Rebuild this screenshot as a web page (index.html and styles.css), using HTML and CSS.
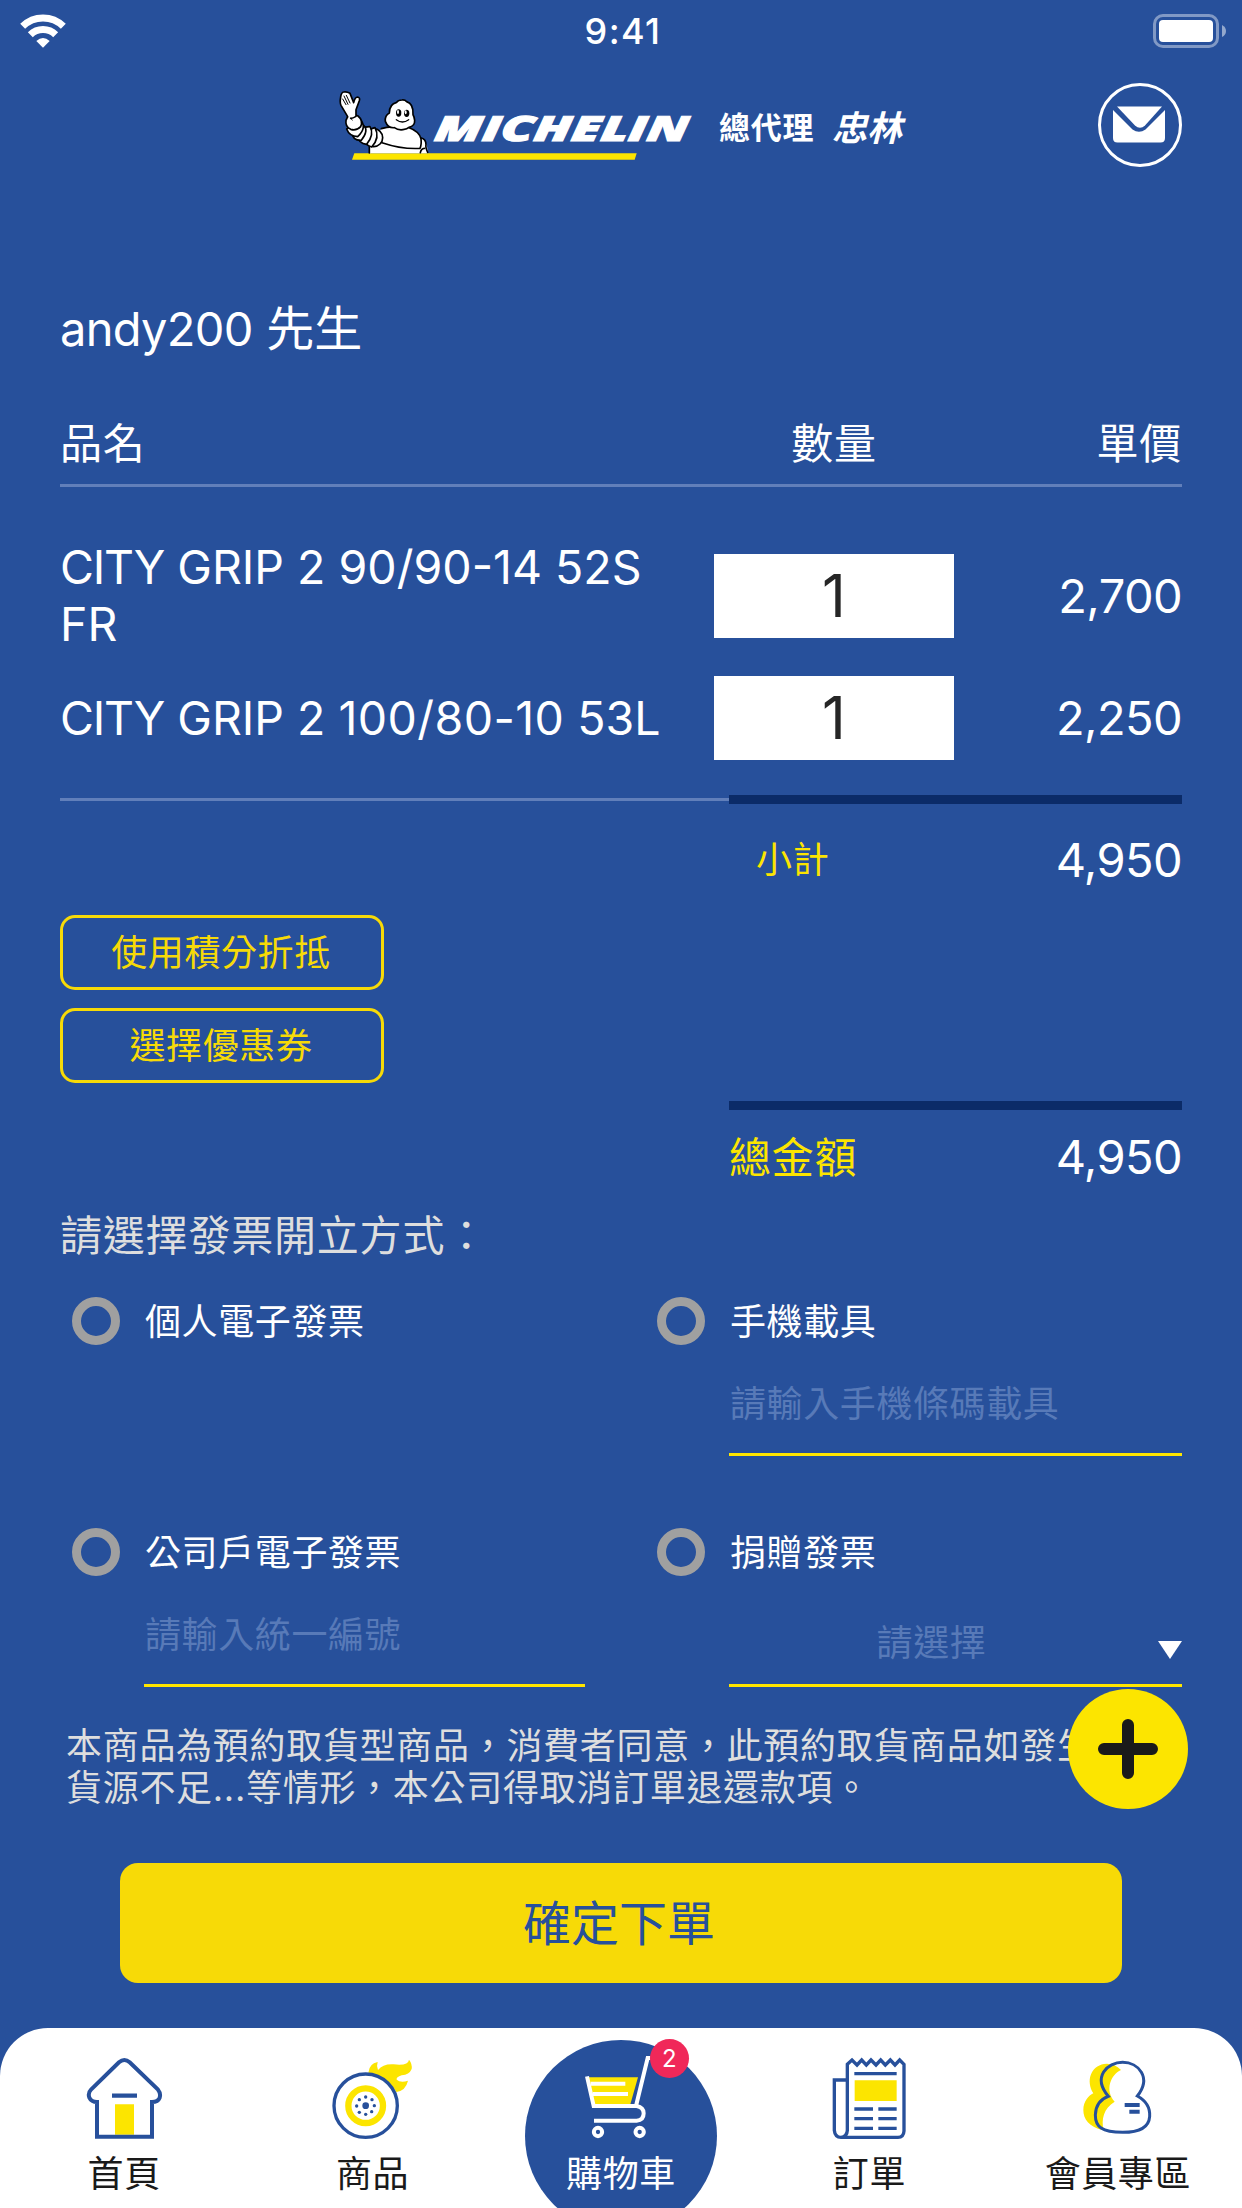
FILE: index.html
```html
<!DOCTYPE html>
<html lang="zh-TW">
<head>
<meta charset="utf-8">
<title>購物車</title>
<link rel="stylesheet" href="styles.css">
</head>
<body>
<div class="screen">
  <div class="status">
    <svg class="wifi" viewBox="0 0 138 102" width="46" height="34">
      <g fill="none" stroke="#fff">
        <path d="M8 37a87 87 0 0 1 122 0" stroke-width="21"/>
        <path d="M31 62a54 54 0 0 1 76 0" stroke-width="21"/>
      </g>
      <path d="M49 81q20-18 40 0l-20 20z" fill="#fff"/>
    </svg>
    <span class="time">9:41</span>
    <svg class="battery" viewBox="0 0 73 34" width="73" height="34">
      <rect x="1.5" y="1.5" width="63" height="31" rx="8.5" fill="none" stroke="#fff" stroke-opacity=".42" stroke-width="3"/>
      <rect x="6" y="6" width="54" height="22" rx="4" fill="#fff"/>
      <path d="M69 11q4 2 4 6t-4 6z" fill="#fff" fill-opacity=".5"/>
    </svg>
  </div>

  <header class="header">
    <svg class="logo" viewBox="39 51 1080 231" width="360" height="77">
      <path d="M103 250H950L944 269H96z" fill="#fce500"/>
      <g fill="#fff" stroke="#000" stroke-width="5" stroke-linejoin="round" stroke-linecap="round">
        <path d="M148 250V226L184 176Q203 172 214 171H265Q297 184 304 204Q321 210 324 250z" stroke="none"/>
        <path d="M148 249V228M184 176Q203 170 222 171M264 172Q297 184 303 206Q305 225 300 235Q245 238 186 218" fill="none"/>
        <path d="M304 204Q318 208 318 224Q316 232 323 247M313 235Q303 236 301 248" fill="none"/>
        <path d="M246 90Q234 90 230 97Q208 102 208 129Q194 137 196 154Q204 175 223 173Q234 181 249 179Q262 178 267 172Q285 168 284 151Q283 140 279 134Q281 101 260 95Q255 89 246 90z"/>
        <circle cx="161" cy="203" r="27"/>
        <path d="M165 173Q181 203 155 231Q133 226 131 201Q140 178 165 173z"/>
        <path d="M150 170Q164 193 140 223Q116 222 110 194Q125 169 150 170z"/>
        <path d="M131 166Q147 181 124 211Q98 212 95 187Q111 164 131 166z"/>
        <path d="M120 148Q143 172 113 200Q88 199 80 177z"/>
        <path d="M83 140Q97 128 114 138Q130 151 122 170Q110 183 92 178Q75 170 78 151z"/>
        <path d="M83 140L63 106Q59 98 62 81Q64 67 71 66Q80 64 90 70L101 98Q105 81 113 81Q121 83 118 92L108 119V139Q99 145 92 145" />
        <path d="M68 87L78 104M72 78L84 103M79 76L90 99M92 145L97 150" fill="none" stroke-width="3"/>
        <path d="M229 149Q247 163 266 149" fill="none" stroke-width="4"/>
      </g>
      <ellipse cx="236" cy="129" rx="8" ry="11" fill="#000"/><ellipse cx="260" cy="130" rx="8" ry="11" fill="#000"/>
      <ellipse cx="234" cy="126" rx="3" ry="6" fill="#fff"/><ellipse cx="257" cy="127" rx="3" ry="6" fill="#fff"/>
      <text class="wordmark" transform="translate(340 212) skewX(-8)" textLength="761" lengthAdjust="spacingAndGlyphs">MICHELIN</text>
    </svg>
    <div class="agent"><b>總代理</b><i>忠林</i></div>
    <svg class="mail" viewBox="0 0 84 84" width="84" height="84">
      <circle cx="42" cy="42" r="40.5" fill="none" stroke="#fff" stroke-width="3"/>
      <path d="M19 23.500H64L47 42.500Q42 47 37 42.500z" fill="#fff"/>
      <path d="M15 27L34.500 46.500Q41 51 47.500 46.500L67 27V55Q67 59.500 62.500 59.500H19.500Q15 59.500 15 55z" fill="#fff"/>
    </svg>
  </header>

  <main class="content">
    <h1 class="customer"><span class="account">andy200</span> 先生</h1>

    <div class="row head"><span>品名</span><span class="qty-h">數量</span><span class="price">單價</span></div>
    <div class="items">
      <div class="row"><span class="name"><span class="tight">CITY</span> GRIP 2 90/90-14 52S FR</span><span class="qty">1</span><span class="price">2,700</span></div>
      <div class="row"><span class="name"><span class="tight">CITY</span> GRIP 2 <span class="loose">100/80-10</span> 53L</span><span class="qty">1</span><span class="price">2,250</span></div>
    </div>
    <div class="divider"><span class="thin"></span><span class="thick"></span></div>

    <div class="subtotal"><span class="label">小計</span><span class="price">4,950</span></div>
    <div class="discounts">
      <div class="outline">使用積分折抵</div>
      <div class="outline">選擇優惠券</div>
    </div>
    <div class="divider second"><span class="thick"></span></div>
    <div class="total"><span class="label">總金額</span><span class="price">4,950</span></div>

    <h2 class="invoice-title">請選擇發票開立方式：</h2>
    <div class="invoices">
      <div class="option"><span class="radio"></span><span class="caption">個人電子發票</span></div>
      <div class="option"><span class="radio"></span><span class="caption">手機載具</span><div class="field">請輸入手機條碼載具</div></div>
      <div class="option"><span class="radio"></span><span class="caption">公司戶電子發票</span><div class="field">請輸入統一編號</div></div>
      <div class="option"><span class="radio"></span><span class="caption">捐贈發票</span>
        <div class="field select"><span>請選擇</span><svg viewBox="0 0 24 18" width="24" height="18"><path d="M0 0H24L12 18z" fill="#fff"/></svg></div>
      </div>
    </div>

    <p class="notice">本商品為預約取貨型商品，消費者同意，此預約取貨商品如發生<br>貨源不足...等情形，本公司得取消訂單退還款項。</p>
    <div class="confirm">確定下單</div>
  </main>

  <svg class="fab" viewBox="0 0 120 120" width="120" height="120">
    <circle cx="60" cy="60" r="60" fill="#fce500"/>
    <path d="M36 60H84M60 36V84" stroke="#1a1a1a" stroke-width="12" stroke-linecap="round"/>
  </svg>

  <nav class="nav">
    <div class="tab">
      <svg viewBox="237 138 270 252" width="90" height="84">
        <path d="M345 283H402V374H345z" fill="#fce500"/>
        <path d="M291 380H456V276Q474 276 479 263Q483 250 474 239L389 157Q373 143 357 157L273 239Q263 249 268 263Q274 276 291 276z" fill="none" stroke="#27509b" stroke-width="12"/>
        <path d="M336 257H411" stroke="#27509b" stroke-width="13"/>
      </svg>
      <span>首頁</span>
    </div>
    <div class="tab">
      <svg viewBox="983 138 270 252" width="90" height="84">
        <path d="M1104 188Q1107 160 1132 156Q1128 167 1133 180Q1148 161 1180 163Q1224 168 1226 149Q1236 161 1234 177Q1227 194 1204 196Q1187 201 1189 209Q1201 220 1223 212Q1216 242 1188 246Q1163 202 1104 188z" fill="#fce500"/>
        <circle cx="1096" cy="287" r="95" fill="#fff" stroke="#27509b" stroke-width="10"/>
        <circle cx="1096" cy="287" r="52" fill="none" stroke="#fce500" stroke-width="19"/>
        <g fill="#27509b"><circle cx="1096" cy="287" r="10"/><circle cx="1096" cy="261" r="5"/><circle cx="1096" cy="313" r="5"/><circle cx="1069" cy="288" r="5"/><circle cx="1122" cy="287" r="5"/><circle cx="1077" cy="269" r="5"/><circle cx="1115" cy="269" r="5"/><circle cx="1077" cy="307" r="5"/><circle cx="1114" cy="305" r="5"/></g>
      </svg>
      <span>商品</span>
    </div>
    <div class="tab active">
      <svg viewBox="228 138 270 252" width="90" height="84">
        <path d="M264 202H414L391 283H280z" fill="#fce500"/>
        <g fill="none" stroke="#fff" stroke-width="12">
          <path d="M261 199L281 288H410Q431 292 431 310Q431 331 410 332H282"/>
          <path d="M451 144H443L408 288M272 221H376M278 252H384"/>
          <circle cx="294" cy="366" r="12.500"/><circle cx="419" cy="366" r="12.500"/>
        </g>
      </svg>
      <span>購物車</span>
      <b class="badge">2</b>
    </div>
    <div class="tab">
      <svg viewBox="973 138 270 252" width="90" height="84">
        <path d="M1065 211H1191V273H1065z" fill="#fce500"/>
        <g fill="none" stroke="#27509b" stroke-width="10">
          <path d="M1043 210H1004V361Q1006 382 1024 382H1195Q1212 382 1213 363V163L1200 150L1186 165L1172 150L1157 165L1143 150L1129 165L1114 150L1100 165L1086 150L1072 165L1057 150L1043 163V361Q1042 380 1024 382"/>
          <path d="M1064 191H1191M1064 297H1120M1136 297H1191M1064 326H1120M1136 326H1191M1064 355H1120M1136 355H1191"/>
        </g>
      </svg>
      <span>訂單</span>
    </div>
    <div class="tab">
      <svg viewBox="518 138 270 252" width="90" height="84">
        <path d="M662 180C630 195 613 242 643 275C610 295 602 328 610 361C565 352 549 326 549 300C549 274 565 257 579 250C556 213 571 169 611 162Q640 158 662 180z" fill="#fce500"/>
        <path d="M624 259C575 200 621 157 667 157C714 157 755 202 711 258C746 277 749 303 748 319C746 351 722 367 667 367C604 367 585 350 585 315C586 285 601 267 624 259z" fill="none" stroke="#27509b" stroke-width="9"/>
        <path d="M673 285H718M687 305H718" stroke="#27509b" stroke-width="12"/>
      </svg>
      <span>會員專區</span>
    </div>
  </nav>
</div>
</body>
</html>
```
FILE: styles.css
```css
* { box-sizing: border-box; }
body {
  margin: 0;
  background: #27509b;
  color: #fff;
  font-family: Inter, "Noto Sans CJK TC", sans-serif;
  font-size: 36px;
  font-weight: 400;
}
h1, h2, p { margin: 0; font-weight: inherit; }
svg { display: block; flex: none; }

.screen {
  position: relative;
  width: 1242px;
  height: 2208px;
  overflow: hidden;
  display: flex;
  flex-direction: column;
}

.status {
  display: grid;
  grid-template-columns: 1fr auto 1fr;
  align-items: center;
  height: 60px;
  padding: 0 16px 0 20px;
}
.time { font-size: 36px; font-weight: 500; letter-spacing: 1.4px; line-height: 60px; padding-top: 1px; }
.battery { justify-self: end; }

.header {
  display: flex;
  align-items: center;
  height: 84px;
  margin-top: 23px;
  padding: 0 60px 0 333px;
}
.wordmark { font-family: "Open Sans"; font-weight: 800; font-style: italic; font-size: 104px; fill: #fff; stroke: #fff; stroke-width: 3; }
.agent { display: flex; gap: 18px; margin-left: 26px; line-height: 40px; padding-top: 6px; font-size: 31px; }
.agent b { font-weight: 700; letter-spacing: .7px; }
.agent i { font-weight: 700; font-size: 35px; }
.mail { margin-left: auto; }

.content { padding: 0 60px; }
.customer { margin-top: 132px; font-size: 48px; line-height: 60px; }
.account { font-size: 47px; letter-spacing: -.7px; }

.row { display: grid; grid-template-columns: 654px 240px 228px; align-items: center; }
.head { height: 73px; margin-top: 55px; border-bottom: 3px solid #617fba; font-size: 42px; line-height: 60px; letter-spacing: .7px; align-items: start; }
.qty-h { text-align: center; }
.price { text-align: right; font-size: 47px; line-height: 60px; letter-spacing: -.6px; }
.head .price { font-size: inherit; letter-spacing: inherit; }
.items { display: grid; gap: 23px; padding-top: 52px; }
.name { width: 630px; font-size: 46.500px; line-height: 57px; }
.tight { letter-spacing: -1.2px; }
.loose { letter-spacing: .4px; }
.qty { height: 84px; background: #fff; color: #262626; text-align: center; font-size: 58.500px; line-height: 84px; }

.divider { display: flex; align-items: center; height: 9px; margin-top: 35px; }
.divider.second { margin-top: 18px; justify-content: flex-end; }
.thin { flex: 1; height: 3px; background: #617fba; }
.thick { width: 453px; height: 9px; background: #0b2b68; }

.subtotal, .total { display: flex; justify-content: space-between; line-height: 60px; }
.label { color: #fce500; letter-spacing: .7px; }
.subtotal { margin-top: 26px; padding-left: 696px; }
.total { margin-top: 17px; padding-left: 669px; font-size: 42px; }
.total .label { padding-top: 1px; margin-bottom: -1px; }

.discounts { display: grid; gap: 18px; margin-top: 25px; width: 324px; }
.outline { height: 75px; padding: 1px 2px 0 0; border: 3px solid #f7da07; border-radius: 15px; color: #f7da07; text-align: center; line-height: 69px; letter-spacing: .6px; }

.invoice-title { margin-top: 19px; font-size: 42px; line-height: 60px; letter-spacing: .8px; color: #dedede; }
.invoices { display: grid; grid-template-columns: 513px 525px; grid-auto-rows: 159px; gap: 72px; margin: 31px 0 0 12px; }
.option { display: grid; grid-template-columns: 48px 1fr; grid-template-rows: 48px 111px; column-gap: 24px; line-height: 48px; letter-spacing: .6px; }
.caption { padding: 1px 0 0 1px; }
.radio { width: 48px; height: 48px; border: 9px solid #a0a0a0; border-radius: 50%; }
.field { grid-column: 2; padding: 29px 0 0 1px; border-bottom: 3px solid #ffe600; line-height: 60px; color: #587ab8; }
.select { display: grid; grid-template-columns: 24px 1fr 24px; padding: 37px 0 0; text-align: center; }
.select span { grid-column: 2; padding-right: 48px; }
.select svg { margin-top: 28px; }

.notice { margin: 38px 0 0 6px; line-height: 42px; letter-spacing: .7px; color: #dedede; white-space: nowrap; }
.confirm { margin: 54px 60px 0; height: 120px; padding-right: 4px; border-radius: 18px; background: #f7da07; color: #27509b; text-align: center; font-size: 48px; line-height: 122px; }

.fab { position: absolute; left: 1068px; top: 1689px; }

.nav { display: flex; flex: none; height: 180px; margin-top: auto; background: #fff; border-radius: 48px 48px 0 0; color: #1a1a1a; overflow: hidden; }
.tab { position: relative; flex: 1; display: flex; flex-direction: column; align-items: center; padding-top: 28px; line-height: 60px; letter-spacing: .6px; }
.tab svg, .tab span { position: relative; }
.tab span { margin-top: 4px; }
.active { color: #fff; }
.active::before { content: ""; position: absolute; left: 28px; top: 12px; width: 192px; height: 192px; border-radius: 50%; background: #27509b; }
.badge { position: absolute; left: 153px; top: 11px; width: 39px; height: 39px; border-radius: 50%; background: #f02859; text-align: center; font-size: 24px; font-weight: 400; line-height: 39px; letter-spacing: 0; }
```
